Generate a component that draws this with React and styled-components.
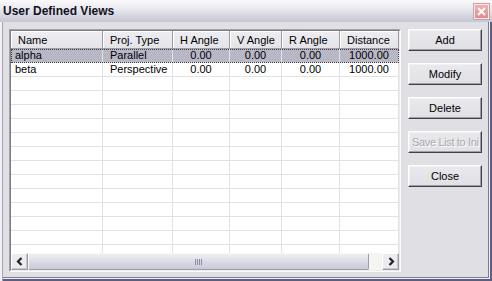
import React from "react";
import styled, { createGlobalStyle } from "styled-components";

const Global = createGlobalStyle`
  html, body { margin: 0; padding: 0; background: #e0dfe3; }
  body { font-family: "Liberation Sans", Arial, sans-serif; font-size: 11px; color: #000; }
  * { box-sizing: border-box; }
`;

const Window = styled.div`
  width: 492px;
  height: 281px;
  display: flex;
  flex-direction: column;
  background: #e0dfe3;
  overflow: hidden;
`;

const TitleBar = styled.div`
  height: 22px;
  flex: none;
  display: flex;
  align-items: center;
  justify-content: space-between;
  padding: 0 3px 1px 3px;
  background: linear-gradient(#fafafc 0%, #ececf1 35%, #d4d4df 75%, #c6c6d5 100%);
`;

const Title = styled.div`
  font-weight: bold;
  font-size: 12px;
  color: #111122;
`;

const CloseBox = styled.div`
  width: 15px;
  height: 15px;
  margin-top: 2px;
  display: flex;
  align-items: center;
  justify-content: center;
  background: linear-gradient(#f0b0b0, #e08c8c);
  border: 1px solid #f6eaea;
  box-shadow: 0 0 0 1px #c9a0a8;
`;

const Client = styled.div`
  flex: 1;
  display: flex;
  gap: 7px;
  padding: 7px 10px 9px 9px;
  box-shadow: inset 2px 0 0 #f2f2f6, inset 3px 0 0 #a4a4b4,
    inset -2px -2px 0 #5d5d80, inset -3px -3px 0 #efeff4, inset -4px -4px 0 #7a7a9c;
`;

const ListOuter = styled.div`
  width: 392px;
  height: 243px;
  border: 1px solid;
  border-color: #a4a3aa #fbfbfb #fbfbfb #a4a3aa;
  display: flex;
`;

const ListInner = styled.div`
  flex: 1;
  display: flex;
  flex-direction: column;
  background: #fff;
  border: 1px solid;
  border-color: #7c7c86 #ecebef #ecebef #7c7c86;
  overflow: hidden;
`;

const Row = styled.div`
  display: grid;
  grid-template-columns: 92px 70px 57px 52px 58px 59px;
  flex: none;
`;

const HeaderCell = styled.div`
  height: 18px;
  display: flex;
  align-items: center;
  padding-left: 7px;
  background: linear-gradient(#eeedf1, #e4e3e8);
  border-right: 1px solid #9d9ca4;
  border-bottom: 1px solid #9d9ca4;
  box-shadow: inset 1px 1px 0 #ffffff;
  white-space: nowrap;
  overflow: hidden;
`;

const Rows = styled.div`
  flex: 1;
  overflow: hidden;
  display: flex;
  flex-direction: column;
`;

const DataRow = styled(Row)`
  height: 14px;
  background: ${(p) => (p.$selected ? "#b8b7c6" : "#fff")};
  outline: ${(p) => (p.$selected ? "1px dotted #3a3a44" : "none")};
  outline-offset: -1px;
`;

const Cell = styled.div`
  height: 14px;
  line-height: 13px;
  border-right: 1px solid #e2e2e2;
  border-bottom: 1px solid #e2e2e2;
  padding-left: ${(p) => (p.$center ? "0" : p.$first ? "4px" : "7px")};
  text-align: ${(p) => (p.$center ? "center" : "left")};
  white-space: nowrap;
  overflow: hidden;
`;

const ScrollBar = styled.div`
  height: 17px;
  flex: none;
  display: flex;
  background: #f4f4f1;
`;

const ScrollBtn = styled.div`
  width: 17px;
  height: 17px;
  flex: none;
  display: flex;
  align-items: center;
  justify-content: center;
  background: #ecebef;
  border: 1px solid;
  border-color: #ffffff #9b9aa6 #9b9aa6 #ffffff;
  box-shadow: inset -1px -1px 0 #c9c8d0;
`;

const Thumb = styled.div`
  width: 341px;
  height: 17px;
  flex: none;
  display: flex;
  align-items: center;
  justify-content: center;
  border: 1px solid;
  border-color: #f8f8fb #9c9cb0 #9c9cb0 #f8f8fb;
  border-radius: 2px;
  background: linear-gradient(#eeeef3, #dcdce6 50%, #c9c9d6);
`;

const Track = styled.div`
  flex: 1;
`;

const Buttons = styled.div`
  display: flex;
  flex-direction: column;
  gap: 12px;
`;

const Button = styled.div`
  width: 74px;
  height: 22px;
  display: flex;
  align-items: center;
  justify-content: ${(p) => (p.$clip ? "flex-start" : "center")};
  padding-left: ${(p) => (p.$clip ? "3px" : "0")};
  letter-spacing: ${(p) => (p.$clip ? "-0.35px" : "0")};
  white-space: nowrap;
  overflow: hidden;
  background: linear-gradient(#e9e8ec, #e1e0e5);
  border: 1px solid;
  border-color: #ffffff #404048 #404048 #ffffff;
  box-shadow: inset -1px -1px 0 #a09fa8, inset 1px 1px 0 #f2f2f4;
  color: ${(p) => (p.$disabled ? "#a8a8ac" : "#000")};
  text-shadow: ${(p) => (p.$disabled ? "1px 1px 0 #ffffff" : "none")};
  font-size: 11px;
`;

const columns = ["Name", "Proj. Type", "H Angle", "V Angle", "R Angle", "Distance"];
const data = [
  ["alpha", "Parallel", "0.00", "0.00", "0.00", "1000.00"],
  ["beta", "Perspective", "0.00", "0.00", "0.00", "1000.00"],
];

function Chevron({ dir }) {
  const d = dir === "left" ? "M5.5 1 L2 4.5 L5.5 8" : "M2.5 1 L6 4.5 L2.5 8";
  return (
    <svg width="8" height="9" viewBox="0 0 8 9">
      <path d={d} fill="none" stroke="#222" strokeWidth="2.2" />
    </svg>
  );
}

function Grip() {
  return (
    <svg width="8" height="6" viewBox="0 0 8 6">
      {[0, 2, 4, 6].map((x) => (
        <rect key={x} x={x} y="0" width="1" height="6" fill="#8a8aa0" />
      ))}
    </svg>
  );
}

export default function App() {
  const empty = Array.from({ length: 13 }, () => ["", "", "", "", "", ""]);
  const rows = [...data, ...empty];
  return (
    <Window>
      <Global />
      <TitleBar>
        <Title>User Defined Views</Title>
        <CloseBox>
          <svg width="9" height="9" viewBox="0 0 9 9">
            <path d="M1 1 L8 8 M8 1 L1 8" stroke="#fff" strokeWidth="2" />
          </svg>
        </CloseBox>
      </TitleBar>
      <Client>
        <ListOuter>
          <ListInner>
            <Row>
              {columns.map((c) => (
                <HeaderCell key={c}>{c}</HeaderCell>
              ))}
            </Row>
            <Rows>
              {rows.map((r, i) => (
                <DataRow key={i} $selected={i === 0}>
                  {r.map((v, j) => (
                    <Cell key={j} $first={j === 0} $center={j >= 2}>
                      {v}
                    </Cell>
                  ))}
                </DataRow>
              ))}
            </Rows>
            <ScrollBar>
              <ScrollBtn>
                <Chevron dir="left" />
              </ScrollBtn>
              <Thumb>
                <Grip />
              </Thumb>
              <Track />
              <ScrollBtn>
                <Chevron dir="right" />
              </ScrollBtn>
            </ScrollBar>
          </ListInner>
        </ListOuter>
        <Buttons>
          <Button>Add</Button>
          <Button>Modify</Button>
          <Button>Delete</Button>
          <Button $disabled $clip>Save List to Ini</Button>
          <Button>Close</Button>
        </Buttons>
      </Client>
    </Window>
  );
}
